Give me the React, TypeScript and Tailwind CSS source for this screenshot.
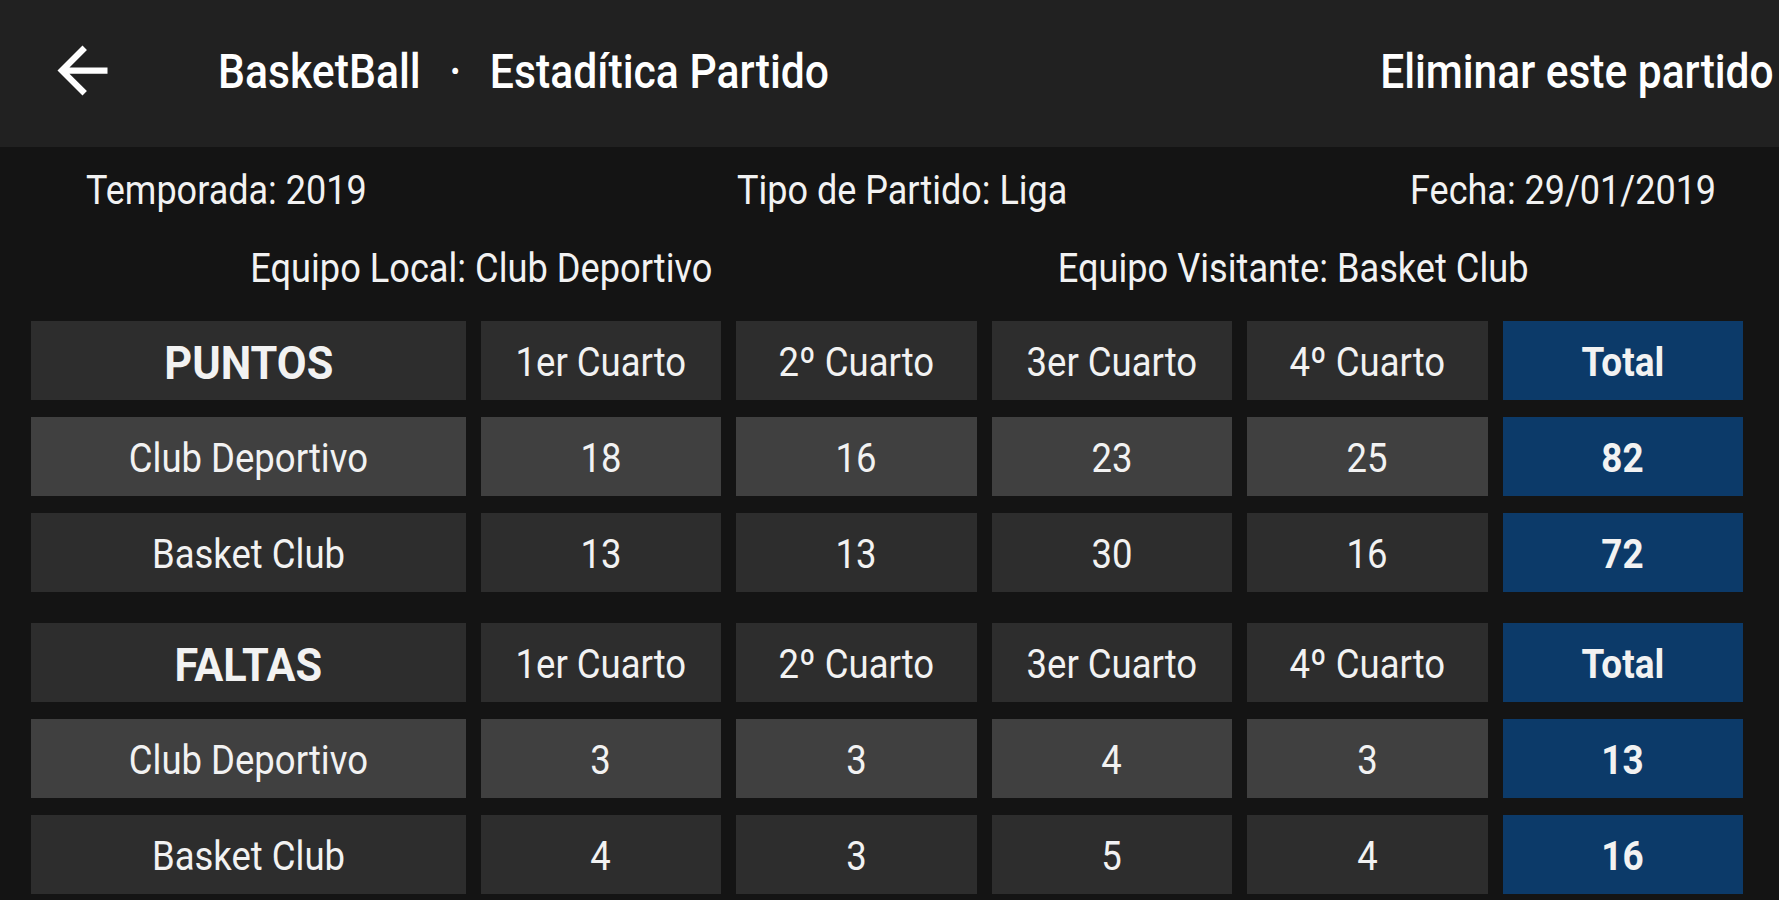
import React from "react";

const font = { fontFamily: "Roboto, 'Noto Sans', sans-serif" } as React.CSSProperties;

type Row = { name: string; q: number[]; total: number };

function Cell({
  children,
  className,
  textClass,
}: {
  children: React.ReactNode;
  className: string;
  textClass: string;
}) {
  return (
    <div className={`flex items-center justify-center h-[79px] pt-[5px] ${className}`}>
      <span className={`inline-block whitespace-nowrap text-[#f2f2f2] ${textClass}`}>{children}</span>
    </div>
  );
}

function StatTable({ title, rows }: { title: string; rows: Row[] }) {
  const quarters = ["1er Cuarto", "2º Cuarto", "3er Cuarto", "4º Cuarto"];
  const reg = "text-[41px] scale-x-[0.89]";
  const bold = "text-[41px] font-bold scale-x-[0.9]";
  return (
    <div className="grid grid-cols-[434fr_240fr_240fr_240fr_240fr_240fr] gap-x-[15px] gap-y-[17px]">
      <Cell className="bg-[#2d2d2d]" textClass="text-[47px] font-bold scale-x-[0.92]">
        {title}
      </Cell>
      {quarters.map((q) => (
        <Cell key={q} className="bg-[#2d2d2d]" textClass={reg}>
          {q}
        </Cell>
      ))}
      <Cell className="bg-[#0c3a69]" textClass={bold}>
        Total
      </Cell>
      {rows.map((r, i) => {
        const bg = i === 0 ? "bg-[#404040]" : "bg-[#2d2d2d]";
        return (
          <React.Fragment key={r.name}>
            <Cell className={bg} textClass={reg}>
              {r.name}
            </Cell>
            {r.q.map((v, j) => (
              <Cell key={j} className={bg} textClass={reg}>
                {v}
              </Cell>
            ))}
            <Cell className="bg-[#0c3a69]" textClass={bold}>
              {r.total}
            </Cell>
          </React.Fragment>
        );
      })}
    </div>
  );
}

export default function App() {
  return (
    <div className="w-[1779px] h-[900px] overflow-hidden bg-[#141414]" style={font}>
      {/* Top bar */}
      <div className="relative h-[147px] bg-[#212121] flex items-center">
        <div className="w-[218px] h-full flex items-center pl-[45px] -mt-[6px]">
          <svg width="75" height="75" viewBox="0 0 24 24" fill="#ffffff">
            <path d="M20 11H7.83l5.59-5.59L12 4l-8 8 8 8 1.41-1.41L7.83 13H20v-2z" />
          </svg>
        </div>
        <div className="flex items-center text-[48px] font-medium text-white -mt-[4px]">
          <span className="inline-block origin-left scale-x-[0.89] whitespace-nowrap">
            BasketBall<span className="mx-[32px]">·</span>Estadítica Partido
          </span>
        </div>
        <div className="ml-auto pr-[5px] text-[48px] font-medium text-white -mt-[4px]">
          <span className="inline-block origin-right scale-x-[0.885] whitespace-nowrap">Eliminar este partido</span>
        </div>
      </div>

      {/* Info */}
      <div className="pt-[5px] text-[40px] text-[#f2f2f2]">
        <div className="h-[78px] flex items-center pl-[86px] pr-[63px]">
          <span className="inline-block origin-left scale-x-[0.9] whitespace-nowrap">Temporada: 2019</span>
          <span className="inline-block ml-[339px] origin-left scale-x-[0.9] whitespace-nowrap">
            Tipo de Partido: Liga
          </span>
          <span className="inline-block ml-auto origin-right scale-x-[0.9] whitespace-nowrap">Fecha: 29/01/2019</span>
        </div>
        <div className="h-[78px] flex items-center pl-[76px] pr-[80px]">
          <div className="flex-1 flex justify-center">
            <span className="inline-block scale-x-[0.905] whitespace-nowrap">Equipo Local: Club Deportivo</span>
          </div>
          <div className="flex-1 flex justify-center">
            <span className="inline-block scale-x-[0.905] whitespace-nowrap">Equipo Visitante: Basket Club</span>
          </div>
        </div>
      </div>

      {/* Tables */}
      <div className="mt-[13px] pl-[31px] pr-[36px] flex flex-col gap-[31px]">
        <StatTable
          title="PUNTOS"
          rows={[
            { name: "Club Deportivo", q: [18, 16, 23, 25], total: 82 },
            { name: "Basket Club", q: [13, 13, 30, 16], total: 72 },
          ]}
        />
        <StatTable
          title="FALTAS"
          rows={[
            { name: "Club Deportivo", q: [3, 3, 4, 3], total: 13 },
            { name: "Basket Club", q: [4, 3, 5, 4], total: 16 },
          ]}
        />
      </div>
    </div>
  );
}
